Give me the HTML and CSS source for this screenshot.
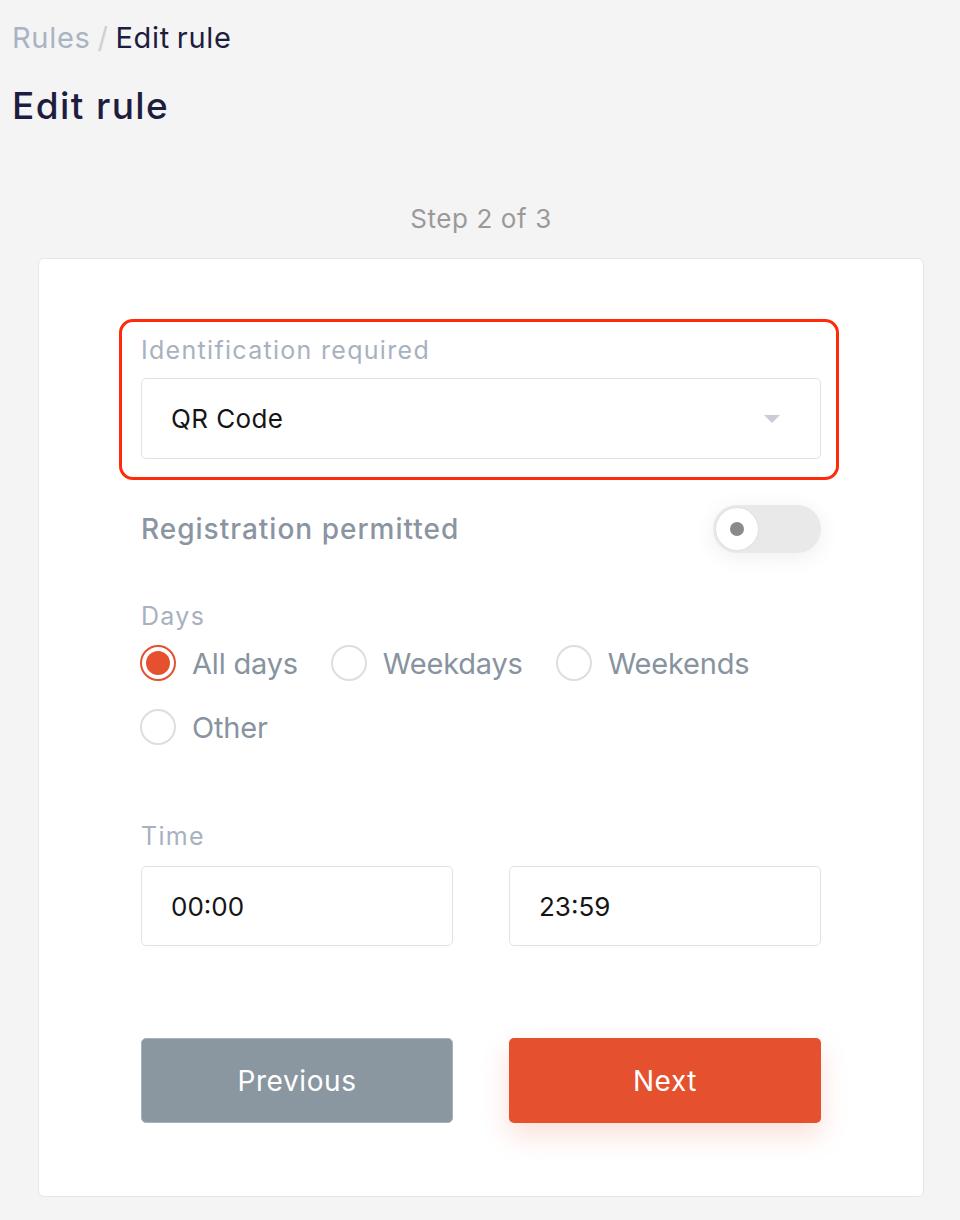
FILE: index.html
```html
<!DOCTYPE html>
<html lang="en">
<head>
  <meta charset="UTF-8">
  <title>Edit rule</title>
  <link rel="stylesheet" href="styles.css">
</head>
<body>
  <div id="page">
    <div class="breadcrumb">
      <span class="crumb-link">Rules</span>
      <span class="crumb-sep">/</span>
      <span class="crumb-current">Edit rule</span>
    </div>
    <h1 class="page-title">Edit rule</h1>

    <div class="step">Step 2 of 3</div>

    <div class="card">
      <!-- highlighted field -->
      <div class="highlight">
        <div class="field-label">Identification required</div>
        <div class="select">
          <span>QR Code</span>
          <span class="caret"></span>
        </div>
      </div>

      <div class="switch-row">
        <span class="switch-label">Registration permitted</span>
        <div class="switch">
          <div class="knob"><span class="knob-dot"></span></div>
        </div>
      </div>

      <div class="field-label days-label">Days</div>
      <div class="radio-group">
        <label class="radio checked"><span class="radio-circle"></span>All days</label>
        <label class="radio"><span class="radio-circle"></span>Weekdays</label>
        <label class="radio"><span class="radio-circle"></span>Weekends</label>
        <label class="radio"><span class="radio-circle"></span>Other</label>
      </div>

      <div class="field-label time-label">Time</div>
      <div class="time-row">
        <div class="input">00:00</div>
        <div class="input">23:59</div>
      </div>

      <div class="button-row">
        <div class="btn btn-prev">Previous</div>
        <div class="btn btn-next">Next</div>
      </div>
    </div>
  </div>
</body>
</html>
```

FILE: styles.css
```css
html, body {
  margin: 0;
  padding: 0;
  background: #f4f4f4;
  font-family: Inter, "Open Sans", sans-serif;
}
#page {
  padding: 22px 36px 0 12px;
}
.breadcrumb {
  font-size: 29px;
  line-height: 32px;
  letter-spacing: 0.7px;
  word-spacing: -2px;
  color: #1e1d40;
}
.crumb-link {
  color: #a9b3c3;
}
.crumb-sep {
  color: #d0d0d0;
}
.page-title {
  margin: 30px 0 0;
  font-size: 37px;
  line-height: 44px;
  font-weight: 500;
  letter-spacing: 1.4px;
  color: #1e1d40;
}
.step {
  margin: 76px 0 0 26px;
  text-align: center;
  font-size: 26px;
  line-height: 30px;
  letter-spacing: 0.6px;
  color: #9a9a9a;
}
.card {
  margin: 24px 0 0 26px;
  background: #fff;
  border: 1px solid #e3e6ea;
  border-radius: 6px;
  padding: 60px 102px 73px;
}
.highlight {
  margin: 0 -18px 0 -22px;
  padding: 14px 15px 18px 19px;
  border: 3px solid #ff2a0c;
  border-radius: 14px;
}
.field-label {
  font-size: 25px;
  line-height: 28px;
  letter-spacing: 1.3px;
  color: #a8b1c0;
}
.select {
  margin-top: 14px;
  height: 79px;
  border: 1px solid #dfe2e7;
  border-radius: 5px;
  display: flex;
  align-items: center;
  justify-content: space-between;
  padding: 0 40px 0 29px;
  font-size: 26px;
  letter-spacing: 0.4px;
  color: #151515;
}
.caret {
  width: 0;
  height: 0;
  border-left: 8px solid transparent;
  border-right: 8px solid transparent;
  border-top: 8px solid #c9ccd4;
}
.switch-row {
  margin-top: 25px;
  display: flex;
  align-items: center;
  justify-content: space-between;
  height: 48px;
}
.switch-label {
  font-size: 28px;
  font-weight: 500;
  letter-spacing: 1px;
  color: #8a95a1;
}
.switch {
  width: 108px;
  height: 48px;
  border-radius: 24px;
  background: #e9e9e9;
  box-shadow: 0 4px 22px rgba(0,0,0,0.07);
  display: flex;
  align-items: center;
  padding: 0 3px;
  box-sizing: border-box;
}
.knob {
  width: 42px;
  height: 42px;
  border-radius: 50%;
  background: #fff;
  box-shadow: 0 0 2px rgba(0,0,0,0.12);
  display: flex;
  align-items: center;
  justify-content: center;
}
.knob-dot {
  width: 14px;
  height: 14px;
  border-radius: 50%;
  background: #8a8a8a;
}
.days-label {
  margin-top: 49px;
}
.radio-group {
  margin: 11px 0 0 -1px;
  display: flex;
  flex-wrap: wrap;
  column-gap: 33px;
  row-gap: 20px;
}
.radio {
  display: flex;
  align-items: center;
  height: 44px;
  font-size: 29px;
  letter-spacing: -0.2px;
  color: #8893a0;
}
.radio-circle {
  width: 36px;
  height: 36px;
  box-sizing: border-box;
  border: 2px solid #dedede;
  border-radius: 50%;
  margin-right: 16px;
  display: flex;
  align-items: center;
  justify-content: center;
}
.radio.checked .radio-circle {
  border-color: #e5502f;
}
.radio.checked .radio-circle::after {
  content: "";
  width: 24px;
  height: 24px;
  border-radius: 50%;
  background: #e5502f;
}
.time-label {
  margin-top: 73px;
}
.time-row {
  margin-top: 16px;
  display: grid;
  grid-template-columns: 1fr 1fr;
  column-gap: 56px;
}
.input {
  height: 78px;
  border: 1px solid #dfe2e7;
  border-radius: 5px;
  display: flex;
  align-items: center;
  padding-left: 29px;
  font-size: 26px;
  color: #151515;
}
.button-row {
  margin-top: 92px;
  display: grid;
  grid-template-columns: 1fr 1fr;
  column-gap: 56px;
}
.btn {
  height: 85px;
  box-sizing: border-box;
  border-radius: 5px;
  display: flex;
  align-items: center;
  justify-content: center;
  font-size: 28px;
  letter-spacing: 0.6px;
  color: #fff;
}
.btn-prev {
  background: #8b97a0;
  border: 1px solid #a7b2bf;
}
.btn-next {
  background: #e5502f;
  box-shadow: 0 12px 28px rgba(229,80,47,0.18);
}
```
